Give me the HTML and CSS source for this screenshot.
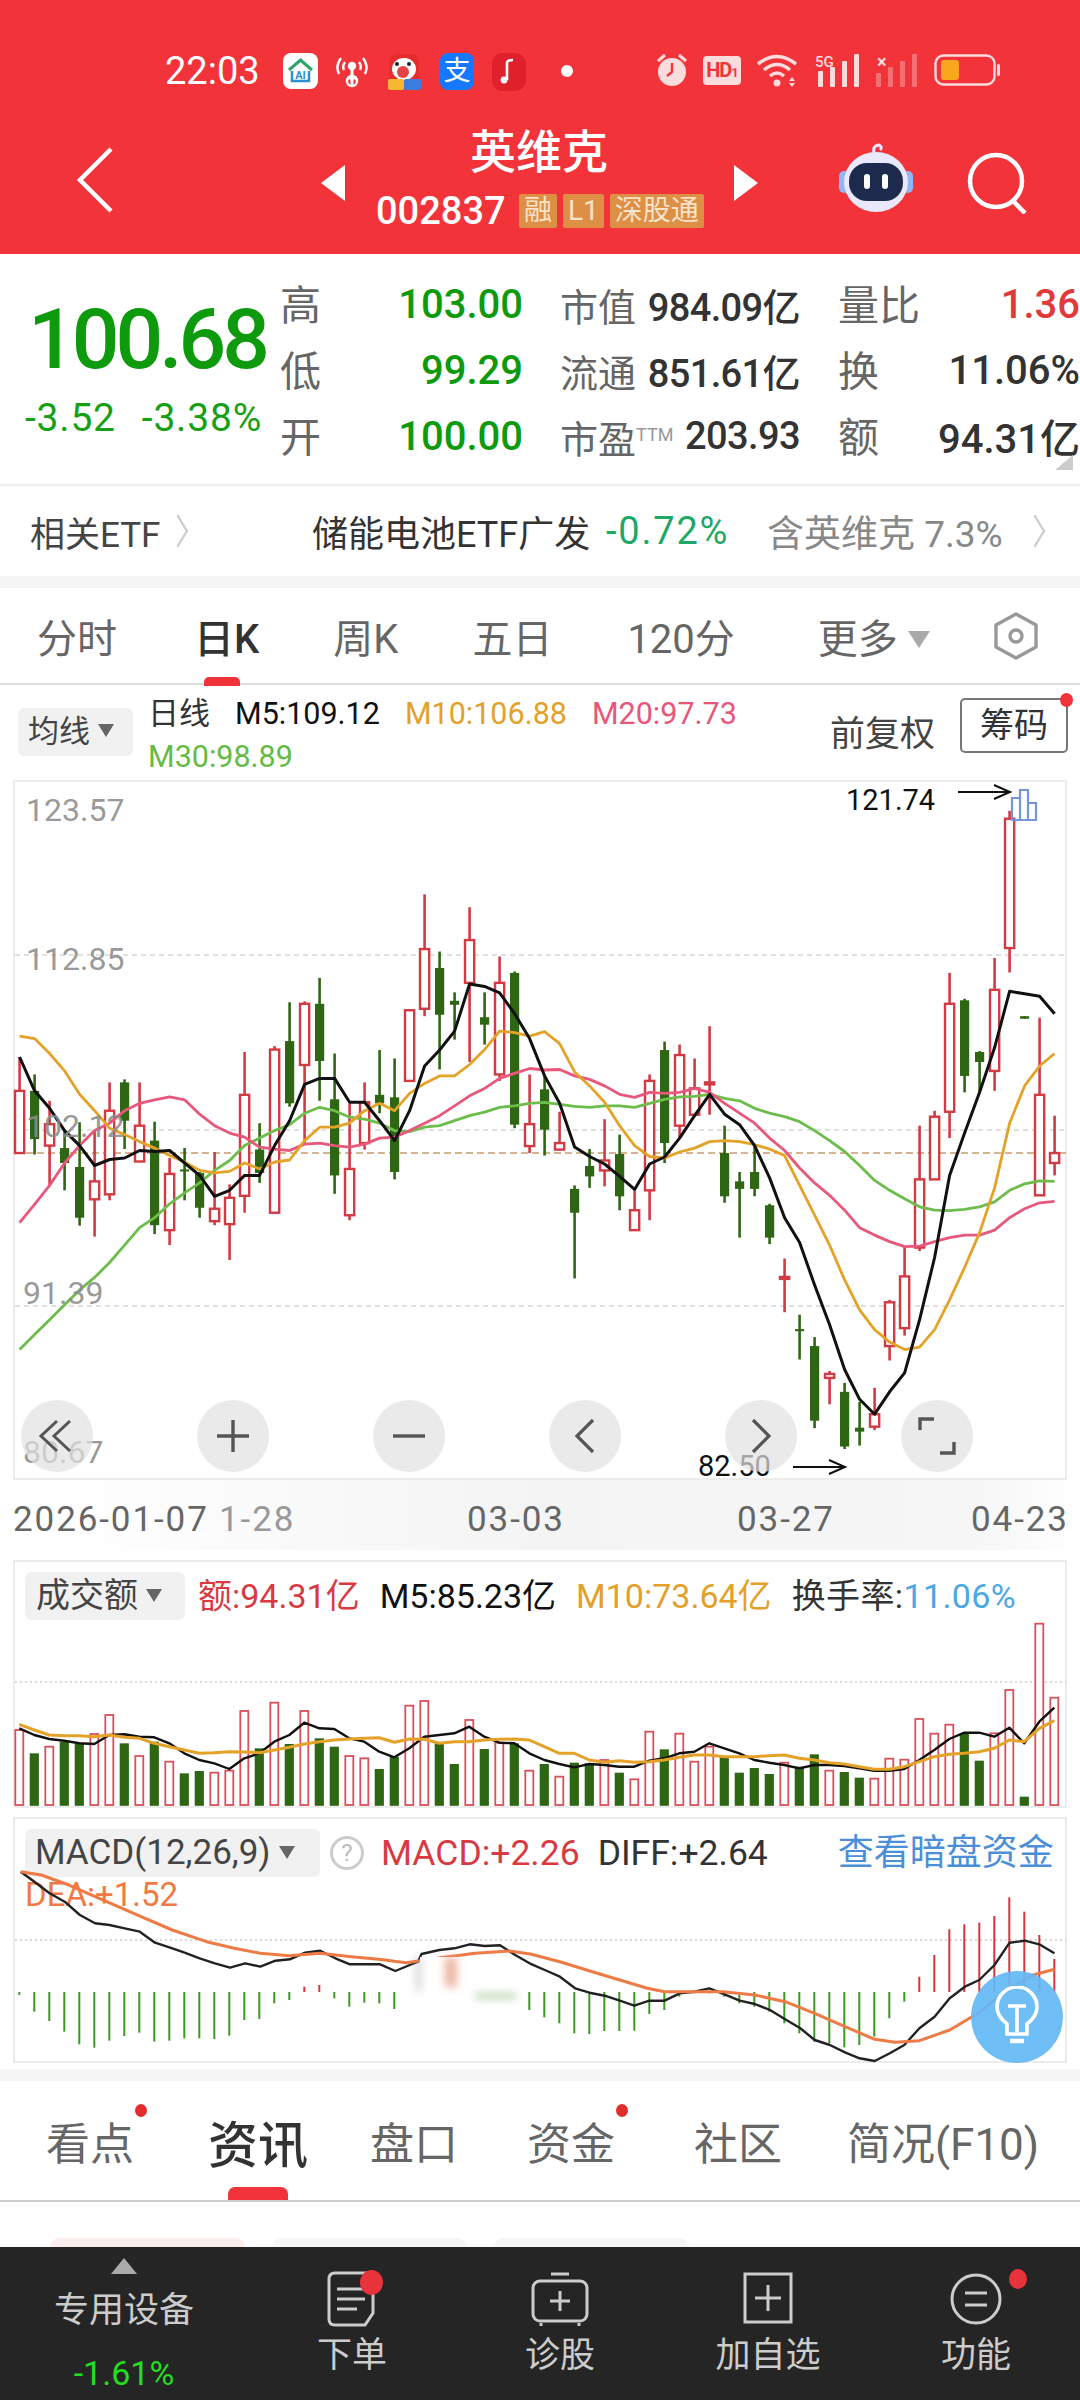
FILE: index.html
```html
<!DOCTYPE html>
<html lang="zh-CN">
<head>
  <meta charset="UTF-8" />
  <meta name="viewport" content="width=device-width, initial-scale=1.0" />
  <title>英维克 002837</title>
  <link rel="stylesheet" href="styles.css">
</head>
<body>

<!-- 顶部红色区域 -->
<header class="top">
  <div class="status">
    <span class="clock">22:03</span>
    <svg class="st-app" width="35" height="36" viewBox="0 0 35 36"><rect width="35" height="36" rx="8" fill="#fff"/><path d="M6 17 L17.5 7 L29 17" fill="none" stroke="#2ea36a" stroke-width="3"/><path d="M9 18 V28 H26 V18" fill="none" stroke="#2f8fd0" stroke-width="2.5"/><text x="17.5" y="26" class="st-ai">AI</text></svg>
    <svg class="st-hot" width="36" height="34" viewBox="0 0 36 34" fill="none" stroke="#fff" stroke-width="2.4"><path d="M7 3 Q1 11 5 19 M29 3 Q35 11 31 19 M11 7 Q8 11 10 15 M25 7 Q28 11 26 15"/><circle cx="18" cy="11" r="3" fill="#fff"/><path d="M18 14 V31 M13 23 H23" stroke-width="3"/><circle cx="18" cy="26" r="5"/></svg>
    <svg class="st-dog" width="36" height="38" viewBox="0 0 36 38"><path d="M3 10 Q3 2 12 1 H30 L33 8 V34 H3 Z" fill="#e52d2d"/><ellipse cx="18" cy="16" rx="12" ry="11" fill="#fff"/><ellipse cx="17" cy="19" rx="6" ry="6" fill="#e2453f"/><circle cx="11" cy="11" r="2" fill="#222"/><circle cx="23" cy="11" r="2" fill="#222"/><rect x="2" y="26" width="16" height="11" rx="2" fill="#f7b733"/><rect x="18" y="26" width="17" height="11" rx="2" fill="#3d7de0"/></svg>
    <span class="st-ali">支</span>
    <svg class="st-note" width="34" height="38" viewBox="0 0 34 38"><rect width="34" height="38" rx="11" fill="#e0202c"/><path d="M15 27 V10 Q15 7 21 7" fill="none" stroke="#fff" stroke-width="2.6"/><circle cx="12" cy="27" r="3.4" fill="#fff"/></svg>
    <i class="st-dot"></i>
    <span class="st-right">
      <svg width="32" height="34" viewBox="0 0 32 34" fill="#fbdcdc"><circle cx="16" cy="19" r="14"/><path d="M2 8 L9 2 M30 8 L23 2" stroke="#fbdcdc" stroke-width="3"/><path d="M16 10 V19 L11 23" fill="none" stroke="#f23339" stroke-width="2.4"/></svg>
      <span class="st-hd">HD<small>1</small></span>
      <svg width="44" height="34" viewBox="0 0 44 34" fill="none" stroke="#fbdcdc" stroke-width="3.6"><path d="M2 11 Q21 -4 40 11 M8 17 Q21 6 34 17 M14 23 Q21 17 28 23"/><circle cx="21" cy="30" r="3.4" fill="#fbdcdc" stroke="none"/><path d="M36 24 L33 28 H39 Z M36 34 L33 30 H39 Z" fill="#fbdcdc" stroke="none"/></svg>
      <svg width="46" height="34" viewBox="0 0 46 34"><text x="0" y="14" class="st-5g">5G</text><g fill="#fbdcdc"><rect x="3" y="18" width="5" height="16" rx="1"/><rect x="15" y="14" width="5" height="20" rx="1"/><rect x="27" y="8" width="5" height="26" rx="1"/><rect x="39" y="1" width="5" height="33" rx="1"/></g></svg>
      <svg width="43" height="34" viewBox="0 0 43 34"><text x="1" y="15" class="st-x">×</text><g fill="#fbdcdc" opacity=".35"><rect x="0" y="20" width="5" height="14" rx="1"/><rect x="12" y="14" width="5" height="20" rx="1"/><rect x="24" y="8" width="5" height="26" rx="1"/><rect x="36" y="1" width="5" height="33" rx="1"/></g></svg>
      <svg width="66" height="32" viewBox="0 0 66 32"><rect x="1.5" y="1.5" width="59" height="29" rx="8" fill="none" stroke="#fbdcdc" stroke-width="2.4"/><rect x="7" y="6" width="18" height="20" rx="3" fill="#f9a71c"/><rect x="63" y="10" width="3" height="12" rx="1.5" fill="#fbdcdc"/></svg>
    </span>
  </div>
  <div class="nav">
    <svg class="nav-back" width="38" height="66" viewBox="0 0 38 66"><path d="M35 2 L4 33 L35 64" fill="none" stroke="#fff" stroke-width="4.5"/></svg>
    <i class="tri-left"></i>
    <div class="stock">
      <div class="stock-name">英维克</div>
      <div class="stock-code">
        <span class="code-num">002837</span>
        <span class="code-tag">融</span><span class="code-tag">L1</span><span class="code-tag">深股通</span>
      </div>
    </div>
    <i class="tri-right"></i>
    <svg class="nav-bot" width="74" height="70" viewBox="0 0 74 70"><path d="M36 12 Q32 3 40 2 Q44 4 41 7" fill="none" stroke="#e8e6ff" stroke-width="3"/><rect x="0" y="28" width="10" height="22" rx="5" fill="#8fb6f5"/><rect x="64" y="28" width="10" height="22" rx="5" fill="#8fb6f5"/><ellipse cx="37" cy="39" rx="32" ry="30" fill="#e9e9fb"/><rect x="10" y="20" width="54" height="38" rx="18" fill="#1e2a4d"/><rect x="25" y="31" width="6" height="15" rx="3" fill="#fff"/><rect x="43" y="31" width="6" height="15" rx="3" fill="#fff"/></svg>
    <svg class="nav-search" width="60" height="62" viewBox="0 0 60 62" fill="none" stroke="#fff" stroke-width="4.5"><circle cx="29" cy="29" r="26"/><path d="M46 49 L58 61"/></svg>
  </div>
</header>

<!-- 报价 -->
<section class="quote">
  <div class="price-box">
    <div class="price">100.68</div>
    <div class="change"><span>-3.52</span><span>-3.38%</span></div>
  </div>
  <div class="q-grid">
    <span class="q-lab">高</span><b class="q-val green">103.00</b>
    <span class="q-mid"><em>市值</em><b>984.09亿</b></span>
    <span class="q-lab2">量比</span><b class="q-val red">1.36</b>

    <span class="q-lab">低</span><b class="q-val green">99.29</b>
    <span class="q-mid"><em>流通</em><b>851.61亿</b></span>
    <span class="q-lab2">换</span><b class="q-val">11.06%</b>

    <span class="q-lab">开</span><b class="q-val green">100.00</b>
    <span class="q-mid"><em>市盈<sup>TTM</sup></em><b>203.93</b></span>
    <span class="q-lab2">额</span><b class="q-val">94.31亿</b>
  </div>
  <i class="corner"></i>
</section>

<section class="etf">
  <span class="etf-title">相关ETF</span>
  <i class="chev"></i>
  <span class="etf-name">储能电池ETF广发</span>
  <span class="etf-pct">-0.72%</span>
  <span class="etf-hold">含英维克 7.3%</span>
  <i class="chev chev-end"></i>
</section>

<div class="band"></div>

<!-- 周期切换 -->
<nav class="periods">
  <span class="p-item p1">分时</span>
  <span class="p-item p2 active">日K</span>
  <span class="p-item p3">周K</span>
  <span class="p-item p4">五日</span>
  <span class="p-item p5">120分</span>
  <span class="p-item p6">更多<i class="caret caret-big"></i></span>
  <svg class="p-hex" width="50" height="48" viewBox="0 0 50 48" fill="none" stroke="#999" stroke-width="3.4"><path d="M25 2 L45 13 V35 L25 46 L5 35 V13 Z" stroke-linejoin="round"/><circle cx="25" cy="24" r="6"/></svg>
</nav>

<!-- 均线 -->
<section class="ma-bar">
  <span class="pick pick-ma">均线<i class="caret"></i></span>
  <div class="ma-vals">
    <div class="ma-row">
      <span class="dark">日线</span>
      <span class="black">M5:109.12</span>
      <span class="orange">M10:106.88</span>
      <span class="pink">M20:97.73</span>
    </div>
    <div class="ma-row"><span class="lime">M30:98.89</span></div>
  </div>
  <span class="adjust">前复权</span>
  <span class="chip-btn">筹码</span>
</section>

<!-- K线 -->
<section class="kline">
  <svg id="kline-svg" class="kline-svg" viewBox="0 780 1080 716" width="1080" height="716"></svg>
  <span class="k-lab l1">123.57</span>
  <span class="k-lab l2">112.85</span>
  <span class="k-lab l3">102.12</span>
  <span class="k-lab l4">91.39</span>
  <span class="k-lab l5">80.67</span>
  <span class="k-mark m-high">121.74</span>
  <span class="k-mark m-low">82.50</span>
  <div class="k-tools">
    <span class="tool"><svg width="40" height="36" viewBox="0 0 40 36" fill="none" stroke="#555" stroke-width="3"><path d="M20 3 L4 18 L20 33 M33 3 L17 18 L33 33"/></svg></span>
    <span class="tool"><svg width="36" height="36" viewBox="0 0 36 36" fill="none" stroke="#555" stroke-width="3.4"><path d="M2 18 H34 M18 2 V34"/></svg></span>
    <span class="tool"><svg width="36" height="36" viewBox="0 0 36 36" fill="none" stroke="#555" stroke-width="3.4"><path d="M2 18 H34"/></svg></span>
    <span class="tool"><svg width="22" height="38" viewBox="0 0 22 38" fill="none" stroke="#555" stroke-width="3.2"><path d="M19 3 L3 19 L19 35"/></svg></span>
    <span class="tool"><svg width="22" height="38" viewBox="0 0 22 38" fill="none" stroke="#555" stroke-width="3.2"><path d="M3 3 L19 19 L3 35"/></svg></span>
    <span class="tool"><svg width="38" height="38" viewBox="0 0 38 38" fill="none" stroke="#555" stroke-width="3.4"><path d="M2 13 V2 H16 M36 25 V36 H22"/></svg></span>
  </div>
</section>

<div class="dates">
  <span class="d-item d1">2026-01-07</span>
  <span class="d-item d2">1-28</span>
  <span class="d-item d3">03-03</span>
  <span class="d-item d4">03-27</span>
  <span class="d-item d5">04-23</span>
</div>

<!-- 成交额 -->
<section class="sub vol">
  <svg id="vol-svg" class="sub-svg" viewBox="0 1560 1080 248" width="1080" height="248"></svg>
  <div class="sub-legend">
    <span class="pick pick-vol">成交额<i class="caret"></i></span>
    <span class="red2">额:94.31亿</span>
    <span class="black">M5:85.23亿</span>
    <span class="orange">M10:73.64亿</span>
    <span class="dark turnover">换手率:<span class="blue">11.06%</span></span>
  </div>
</section>

<!-- MACD -->
<section class="sub macd">
  <div class="sub-legend legend-macd">
    <span class="pick pick-macd">MACD(12,26,9)<i class="caret"></i></span>
    <span class="help">?</span>
    <span class="red2">MACD:+2.26</span>
    <span class="dark">DIFF:+2.64</span>
    <span class="dark-link">查看暗盘资金</span>
  </div>
  <div class="dea">DEA:+1.52</div>
  <svg id="macd-svg" class="sub-svg" viewBox="0 1817 1080 246" width="1080" height="246"></svg>
  <span class="bulb"><svg width="44" height="62" viewBox="0 0 44 62" fill="none" stroke="#fff" stroke-width="3.6"><path d="M12 38 Q2 30 2 21 A20 20 0 0 1 42 21 Q42 30 32 38 V48 H12 Z"/><path d="M13 20 H31 M22 20 V46"/><path d="M15 55 H29" stroke-width="4.5"/></svg></span>
</section>

<div class="band band-low"></div>

<!-- 资讯 -->
<nav class="news-tabs">
  <span class="n-item n1 dotted">看点</span>
  <span class="n-item n2 active">资讯</span>
  <span class="n-item n3">盘口</span>
  <span class="n-item n4 dotted">资金</span>
  <span class="n-item n5">社区</span>
  <span class="n-item n6">简况(F10)</span>
</nav>

<div class="pills">
  <i class="pill pill-on"></i><i class="pill"></i><i class="pill"></i>
</div>

<!-- 底部 -->
<footer class="bar">
  <div class="bar-item bar-sector">
    <i class="bar-up"></i>
    <span class="sector-name">专用设备</span>
    <span class="sector-pct">-1.61%</span>
  </div>
  <div class="bar-item">
    <span class="bar-icon"><svg width="50" height="56" viewBox="0 0 50 56" fill="none" stroke="#ccc" stroke-width="3"><path d="M8 2 H46 V42 L38 54 H8 Q2 54 2 48 V8 Q2 2 8 2 Z"/><path d="M10 18 H38 M10 28 H38 M10 38 H30"/></svg><i class="b-dot b-dot-order"></i></span>
    <span class="bar-label">下单</span>
  </div>
  <div class="bar-item">
    <span class="bar-icon"><svg width="58" height="56" viewBox="0 0 58 56" fill="none" stroke="#ccc" stroke-width="3"><path d="M20 3 H38"/><rect x="2" y="10" width="54" height="40" rx="7"/><path d="M29 20 V40 M19 30 H39"/><path d="M10 52 V55 M48 52 V55"/></svg></span>
    <span class="bar-label">诊股</span>
  </div>
  <div class="bar-item">
    <span class="bar-icon"><svg width="50" height="56" viewBox="0 0 50 56" fill="none" stroke="#ccc" stroke-width="3"><rect x="2" y="3" width="46" height="48"/><path d="M25 14 V40 M12 27 H38"/></svg></span>
    <span class="bar-label">加自选</span>
  </div>
  <div class="bar-item">
    <span class="bar-icon"><svg width="52" height="56" viewBox="0 0 52 56" fill="none" stroke="#ccc" stroke-width="3"><circle cx="26" cy="28" r="24"/><path d="M15 22 H37 M15 34 H37"/></svg><i class="b-dot b-dot-func"></i></span>
    <span class="bar-label">功能</span>
  </div>
</footer>

<script src="chart.js"></script>
</body>
</html>
```

FILE: styles.css
```css
* {
  box-sizing: border-box;
}

body {
  margin: 0;
  width: 1080px;
  height: 2400px;
  overflow: hidden;
  background: #fff;
  font-family: Roboto, "Noto Sans CJK SC", sans-serif;
  color: #333;
}

i, em {
  font-style: normal;
}

b {
  font-weight: 500;
}

/* 顶部 */
.top {
  height: 254px;
  background: #f23339;
  color: #fff;
}

.status {
  height: 125px;
  padding: 53px 0 0 165px;
  display: flex;
  align-items: flex-start;
}

.clock {
  font-size: 38px;
  line-height: 36px;
  width: 118px;
}

.st-ai { font: 700 11px Roboto, sans-serif; fill: #2f8fd0; text-anchor: middle; }
.st-5g { font: 500 15px Roboto, sans-serif; fill: #fbdcdc; }
.st-x { font: 700 18px Roboto, sans-serif; fill: #fbdcdc; }

.st-hot { margin: 2px 0 0 16px; }
.st-dog { margin-left: 16px; }

.st-ali {
  width: 34px;
  height: 37px;
  margin-left: 18px;
  border-radius: 8px;
  background: #1677ff;
  font-size: 27px;
  line-height: 36px;
  text-align: center;
}

.st-note { margin-left: 18px; }

.st-dot {
  width: 12px;
  height: 12px;
  margin: 12px 0 0 35px;
  border-radius: 50%;
  background: #fff;
}

.st-right {
  display: flex;
  align-items: center;
  gap: 15px;
  margin-left: 83px;
}

.st-hd {
  width: 38px;
  height: 29px;
  border-radius: 4px;
  background: #fbdcdc;
  color: #f23339;
  font-size: 20px;
  font-weight: 700;
  line-height: 29px;
  text-align: center;
  letter-spacing: -1px;
}

.st-hd small { font-size: 13px; }

.nav {
  display: flex;
  align-items: flex-start;
  padding-left: 76px;
}

.nav-back { margin-top: 22px; }

.tri-left, .tri-right {
  width: 0;
  height: 0;
  margin-top: 40px;
  border-top: 18px solid transparent;
  border-bottom: 18px solid transparent;
}

.tri-left { margin-left: 207px; border-right: 24px solid #fff; }
.tri-right { margin-left: 30px; border-left: 24px solid #fff; }

.stock {
  width: 328px;
  margin-left: 31px;
}

.stock-name {
  height: 68px;
  padding-left: 94px;
  font-size: 46px;
  font-weight: 500;
  line-height: 54px;
}

.stock-code {
  display: flex;
  align-items: center;
  height: 36px;
  white-space: nowrap;
}

.code-num {
  flex-shrink: 0;
  width: 143px;
  font-size: 38px;
  font-weight: 500;
}

.code-tag {
  flex-shrink: 0;
  height: 34px;
  margin-right: 6px;
  padding: 0 5px;
  border-radius: 2px;
  background: #dd8f45;
  color: #f8e2c8;
  font-size: 28px;
  line-height: 33px;
}

.nav-bot { margin: 18px 0 0 81px; }
.nav-search { margin: 27px 0 0 54px; }

/* 报价 */
.quote {
  position: relative;
  display: flex;
  height: 232px;
  border-bottom: 2px solid #eee;
}

.price-box {
  flex-shrink: 0;
  width: 280px;
  padding: 41px 0 0 28px;
}

.price {
  color: #0d9a0d;
  font-size: 84px;
  font-weight: 500;
  line-height: 90px;
  letter-spacing: -4px;
}

.change {
  display: flex;
  gap: 26px;
  margin: 11px 0 0 -3px;
  color: #16a016;
  font-size: 39px;
  line-height: 44px;
  letter-spacing: .8px;
  white-space: nowrap;
}

.q-grid {
  flex: 1;
  display: grid;
  grid-template-columns: 60px 183px 277px 130px 1fr;
  grid-auto-rows: 66px;
  align-items: center;
  padding: 17px 0 0 0;
  white-space: nowrap;
}

.q-lab, .q-lab2 {
  margin-top: -5px;
  color: #666;
  font-size: 41px;
}

.q-lab2 { margin-left: 38px; }

.q-val {
  font-size: 40px;
  text-align: right;
}

.q-mid {
  display: flex;
  justify-content: space-between;
  margin-left: 37px;
  align-items: center;
}

.q-mid em {
  color: #666;
  font-size: 38px;
}

.q-mid sup {
  font-size: 18px;
  vertical-align: 12px;
  line-height: 0;
  color: #999;
}

.q-mid b {
  font-size: 38px;
  letter-spacing: -.6px;
}

.green { color: #0d9a0d; }
.red { color: #e03a3a; }

.corner {
  position: absolute;
  right: 7px;
  top: 201px;
  width: 0;
  height: 0;
  border-left: 18px solid transparent;
  border-bottom: 15px solid #ccc;
}

/* 相关ETF */
.etf {
  display: flex;
  align-items: center;
  height: 90px;
  padding-left: 30px;
  font-size: 35px;
  white-space: nowrap;
}

.etf-title { color: #444; width: 140px; }
.etf-name { margin-left: 122px; width: 294px; color: #333; font-size: 36px; }
.etf-pct { width: 161px; color: #1da866; font-size: 38px; letter-spacing: 1.8px; }
.etf-hold { width: 256px; color: #888; font-size: 37px; }

.chev {
  width: 24px;
  height: 24px;
  margin-left: -4px;
  border-top: 3px solid #ccc;
  border-right: 3px solid #ccc;
  transform: scaleX(.6) rotate(45deg);
}

.chev-end { margin-left: 0; }

.band {
  height: 12px;
  background: #f5f5f5;
}

/* 周期 */
.periods {
  position: relative;
  display: flex;
  align-items: center;
  height: 97px;
  border-bottom: 2px solid #ddd;
}

.p-item {
  position: relative;
  color: #666;
  font-size: 40px;
  white-space: nowrap;
}

.p1 { margin-left: 37px; }
.p2 { margin-left: 77px; }
.p3 { margin-left: 74px; }
.p4 { margin-left: 74px; }
.p5 { margin-left: 75px; }
.p6 { margin-left: 83px; }
.p-hex { margin-left: 61px; }

.p-item.active {
  color: #333;
  font-weight: 500;
}

.p-item.active::after {
  content: '';
  position: absolute;
  left: 10px;
  bottom: -21px;
  width: 36px;
  height: 9px;
  border-radius: 5px 5px 0 0;
  background: #ef3338;
}

.caret {
  display: inline-block;
  margin-left: 8px;
  vertical-align: 5px;
  border-left: 8px solid transparent;
  border-right: 8px solid transparent;
  border-top: 13px solid #666;
}

.caret-big {
  margin-left: 10px;
  border-left-width: 11px;
  border-right-width: 11px;
  border-top: 17px solid #aaa;
}

/* 均线 */
.ma-bar {
  position: relative;
  display: flex;
  height: 95px;
  padding-left: 18px;
  white-space: nowrap;
}

.pick {
  height: 48px;
  border-radius: 6px;
  background: #f1f1f1;
  color: #444;
  line-height: 47px;
  white-space: nowrap;
}

.pick-ma {
  width: 115px;
  margin-top: 23px;
  padding-left: 10px;
  font-size: 31px;
}

.ma-vals {
  width: 643px;
  margin-left: 15px;
  font-size: 30.5px;
  line-height: 43px;
}

.ma-row {
  display: flex;
  gap: 25px;
}

.ma-vals .ma-row:first-child { margin-top: 7px; }
.ma-vals .dark { font-size: 31px; }

.dark { color: #333; }
.black { color: #111; }
.orange { color: #e3a02a; }
.pink { color: #e8567a; }
.lime { color: #64bb45; }
.red2 { color: #d93a42; }
.blue { color: #4ba8e2; }

.adjust {
  margin: 20px 0 0 39px;
  font-size: 35px;
  color: #444;
}

.chip-btn {
  position: relative;
  width: 108px;
  height: 55px;
  margin: 13px 0 0 25px;
  border: 2px solid #777;
  border-radius: 5px;
  font-size: 34px;
  line-height: 50px;
  text-align: center;
}

.chip-btn::after {
  content: '';
  position: absolute;
  right: -7px;
  top: -7px;
  width: 13px;
  height: 14px;
  border-radius: 50%;
  background: #f0333a;
}

/* K线 */
.kline {
  position: relative;
  width: 1054px;
  height: 700px;
  margin-left: 13px;
  border: 2px solid #ececec;
}

.kline-svg {
  position: absolute;
  left: -15px;
  top: -2px;
  overflow: visible;
}

.k-lab {
  position: absolute;
  color: rgba(140,140,140,.9);
  font-size: 32px;
  line-height: 36px;
}

.l1 { left: 11px; top: 10px; }
.l2 { left: 11px; top: 159px; }
.l3 { left: 11px; top: 326px; }
.l4 { left: 8px; top: 493px; }
.l5 { left: 8px; top: 652px; }

.k-mark {
  position: absolute;
  color: #111;
  font-size: 29px;
  line-height: 32px;
}

.m-high { left: 831px; top: 2px; }
.m-low { left: 683px; top: 668px; }

.k-tools {
  position: absolute;
  left: 6px;
  top: 618px;
  display: flex;
  gap: 104px;
}

.tool {
  display: flex;
  align-items: center;
  justify-content: center;
  width: 72px;
  height: 72px;
  border-radius: 50%;
  background: rgba(225,225,225,.7);
}

.dates {
  position: relative;
  height: 70px;
  background: linear-gradient(90deg, #fff 5%, #f4f4f4 50%, #f6f6f6 90%, #fff);
}

.d-item {
  position: absolute;
  top: 20px;
  color: #666;
  font-size: 35px;
  line-height: 40px;
  letter-spacing: 1.9px;
}

.d1 { left: 13px; }
.d2 { left: 219px; color: #999; }
.d3 { left: 467px; }
.d4 { left: 737px; }
.d5 { left: 971px; }

/* 副图 */
.sub {
  position: relative;
  width: 1054px;
  margin-left: 13px;
  border: 2px solid #ececec;
}

.vol {
  height: 248px;
  margin-top: 10px;
}

.macd {
  height: 246px;
  margin-top: 9px;
}

.sub-svg {
  position: absolute;
  left: -15px;
  top: -2px;
}

.sub-legend {
  position: relative;
  display: flex;
  align-items: center;
  padding: 10px 0 0 10px;
  font-size: 34px;
  line-height: 48px;
  white-space: nowrap;
}

.sub-legend > span { margin-right: 20px; }

.turnover { letter-spacing: .4px; }

.pick-vol {
  width: 160px;
  padding-left: 11px;
  font-size: 34px;
}

.sub-legend > .pick-vol { margin-right: 13px; }

.legend-macd { font-size: 35.5px; }

.legend-macd > .pick-macd { width: 295px; margin-right: 10px; }

.pick-macd {
  padding-left: 10px;
  font-size: 35px;
}

.legend-macd > .red2 { margin-right: 18px; }

.sub-legend > .help {
  width: 34px;
  height: 34px;
  margin-right: 17px;
  border: 3px solid #ccc;
  border-radius: 50%;
  color: #bbb;
  font-size: 24px;
  line-height: 28px;
  text-align: center;
}

.sub-legend > .dark-link {
  margin: 0 0 0 50px;
  color: #4b8fd8;
  font-size: 36px;
}

.dea {
  position: relative;
  margin-left: 10px;
  color: #ef7a45;
  font-size: 33px;
  line-height: 36px;
}

.smudge {
  filter: blur(4px);
}

.bulb {
  position: absolute;
  left: 956px;
  top: 152px;
  display: flex;
  align-items: center;
  justify-content: center;
  width: 92px;
  height: 92px;
  border-radius: 50%;
  background: rgba(100,185,245,.92);
}

/* 资讯 */
.band-low { margin-top: 6px; }

.news-tabs {
  position: relative;
  display: flex;
  height: 121px;
  border-bottom: 2px solid #ccc;
  color: #666;
  font-size: 44px;
  align-items: center;
  white-space: nowrap;
}

.n-item { position: relative; }
.n1 { margin-left: 46px; }
.n2 { margin-left: 74px; font-size: 50px; font-weight: 500; color: #333; }
.n3 { margin-left: 62px; }
.n4 { margin-left: 69px; }
.n5 { margin-left: 79px; }
.n6 { margin-left: 65px; }

.dotted::after {
  content: '';
  position: absolute;
  right: -13px;
  top: -5px;
  width: 12px;
  height: 13px;
  border-radius: 50%;
  background: #e22d2d;
}

.n2::after {
  content: '';
  position: absolute;
  left: 20px;
  bottom: -23px;
  width: 60px;
  height: 13px;
  border-radius: 7px 7px 0 0;
  background: #f23339;
}

.pills {
  display: flex;
  gap: 27px;
  height: 45px;
  padding: 36px 0 0 50px;
}

.pill {
  width: 195px;
  height: 9px;
  border-radius: 9px 9px 0 0;
  background: #f6f6f6;
}

.pill-on { background: #fdeeee; }

/* 底部 */
.bar {
  display: flex;
  height: 153px;
  background: #252525;
  color: #ccc;
}

.bar-item {
  position: relative;
  flex: 1;
  display: flex;
  flex-direction: column;
  align-items: center;
  padding-top: 24px;
}

.bar-sector {
  flex: 0 0 248px;
  padding-top: 11px;
}

.bar-up {
  width: 0;
  height: 0;
  border-left: 13px solid transparent;
  border-right: 13px solid transparent;
  border-bottom: 16px solid #aaa;
}

.sector-name {
  margin-top: 17px;
  font-size: 35px;
  line-height: 40px;
}

.sector-pct {
  margin-top: 22px;
  color: #22dd22;
  font-size: 34px;
  line-height: 40px;
}

.bar-icon {
  position: relative;
  display: block;
  height: 56px;
}

.bar-icon svg { display: block; }

.bar-label {
  margin-top: 9px;
  font-size: 35px;
  line-height: 40px;
}

.b-dot {
  position: absolute;
  border-radius: 50%;
  background: #e8333a;
}

.b-dot-order { right: -6px; top: -1px; width: 23px; height: 25px; }
.b-dot-func { right: -25px; top: -2px; width: 18px; height: 20px; }
```

FILE: chart.js
```js
// 数据按截图量出来的，y 都是放大图上的坐标，画的时候再换算
const NS = 'http://www.w3.org/2000/svg';
const RED = '#d23a44';
const GREEN = '#2f6614';

function add(svg, tag, attrs) {
  const el = document.createElementNS(NS, tag);
  for (const k in attrs) el.setAttribute(k, attrs[k]);
  svg.appendChild(el);
  return el;
}

function line(svg, pts, color, width) {
  add(svg, 'polyline', {
    points: pts.map(p => p[0].toFixed(1) + ',' + p[1].toFixed(1)).join(' '),
    fill: 'none', stroke: color, 'stroke-width': width, 'stroke-linejoin': 'round'
  });
}

function dash(svg, y, color, x1, x2, gap) {
  add(svg, 'line', { x1, x2, y1: y, y2: y, stroke: color, 'stroke-width': 1.5, 'stroke-dasharray': gap });
}

/* ---------- K线 ---------- */
// [红/绿, 高, 实体上, 实体下, 低]
const candles = [
  ['r',597,665,790,790],['g',632,665,762,793],['r',685,732,775,855],['g',745,780,810,865],['g',728,818,920,936],
  ['r',745,847,883,958],['r',648,705,873,885],['g',642,648,725,782],['r',648,735,807,807],['g',727,765,935,953],
  ['r',800,832,945,975],['g',780,823,827,885],['g',828,830,900,920],['r',788,902,927,935],['r',853,880,933,1005],
  ['r',587,673,876,910],['g',730,783,830,850],['r',575,582,910,910],['g',487,565,690,697],['r',485,490,613,770],
  ['g',438,490,605,685],['g',590,682,835,872],['r',690,822,915,925],['r',648,688,770,783],['g',583,673,690,710],
  ['g',600,678,828,843],['r',503,503,645,645],['r',270,380,500,515],['g',385,418,512,622],['g',467,484,492,562],
  ['r',296,362,448,607],['g',467,517,532,572],['r',395,448,632,645],['g',425,428,733,740],['r',632,732,776,790],
  ['g',635,662,743,795],['r',707,770,783,785],['g',855,862,910,1042],['g',782,816,837,860],['r',722,805,825,857],
  ['g',753,792,877,905],['r',865,905,945,945],['r',632,645,865,925],['g',566,583,770,810],['r',572,593,735,760],
  ['r',600,660,713,713],['r',535,648,650,713],['g',735,790,877,890],['g',828,847,862,960],['g',775,828,862,877],
  ['g',892,895,960,973],['r',1002,1039,1042,1110],['g',1115,1144,1148,1205],['g',1160,1178,1328,1343],['r',1228,1234,1242,1295],
  ['g',1252,1270,1380,1385],['g',1290,1342,1350,1378],['r',1262,1315,1340,1347],['r',1085,1090,1178,1207],['r',978,1038,1142,1157],
  ['r',735,843,980,987],['r',705,717,843,843],['r',428,490,707,760],['g',480,483,635,668],['g',585,587,607,670],
  ['r',398,462,625,665],['r',102,118,378,427],['g',515,515,520,520],['r',518,673,875,875],['r',715,790,810,835]
];
const ma5 = [597,665,700,745,775,815,803,800,785,787,785,810,835,877,865,835,835,775,725,652,640,640,688,688,725,765,705,615,583,545,450,455,468,510,560,635,690,778,797,812,837,863,812,798,760,715,672,712,733,775,840,920,970,1055,1135,1225,1285,1315,1270,1232,1125,1000,835,750,668,578,465,470,475,510];
const ma10 = [555,560,590,625,672,705,740,753,767,780,795,808,825,830,827,810,822,808,804,765,738,738,730,705,690,705,670,650,635,635,612,582,545,548,555,546,570,627,655,688,735,775,797,800,788,780,767,765,767,773,782,795,855,915,975,1045,1105,1145,1170,1185,1180,1145,1085,1020,950,860,730,655,615,590];
const ma20 = [930,893,855,810,775,745,730,705,690,683,677,683,712,735,750,758,778,782,785,772,770,775,778,772,760,758,745,730,715,695,675,660,640,630,620,623,622,635,642,655,672,678,668,670,668,660,668,690,710,730,760,785,820,850,875,905,940,955,968,978,977,968,960,955,955,945,920,902,890,887];
const ma30 = [1185,1155,1125,1095,1065,1040,1010,975,940,920,892,870,850,825,805,775,760,745,733,710,698,705,718,722,730,745,747,738,735,725,715,708,698,695,690,688,692,696,698,695,695,698,690,682,677,676,672,680,685,700,710,717,727,745,765,787,815,845,865,882,898,905,906,903,898,888,865,852,846,847];

function drawKline() {
  const svg = document.getElementById('kline-svg');
  const kx = i => 19.6 + 15 * i;
  const ky = z => 760 + z / 2.01;

  [955, 1130, 1306].forEach(y => dash(svg, y, '#d6d6d6', 15, 1066, '5 4'));
  dash(svg, 1153, '#c99a6e', 15, 1066, '7 4');

  candles.forEach((c, i) => {
    const x = kx(i);
    const color = c[0] === 'r' ? RED : GREEN;
    add(svg, 'line', { x1: x, x2: x, y1: ky(c[1]), y2: ky(c[4]), stroke: color, 'stroke-width': 2.6 });
    const top = ky(c[2]);
    const h = Math.max(ky(c[3]) - top, 2);
    if (c[0] === 'r') {
      add(svg, 'rect', { x: x - 4.6, y: top, width: 9.2, height: h, fill: '#fff', stroke: color, 'stroke-width': 2.4 });
    } else {
      add(svg, 'rect', { x: x - 4.6, y: top, width: 9.2, height: h, fill: color });
    }
  });

  const series = (arr) => arr.map((z, i) => [kx(i), ky(z)]);
  line(svg, series(ma30), '#6cbd4b', 2.8);
  line(svg, series(ma20), '#e8587c', 2.8);
  line(svg, series(ma10), '#e5a228', 2.8);
  line(svg, series(ma5), '#111', 3);

  // 最高最低箭头
  add(svg, 'path', { d: 'M958 792 H1010 M994 785 L1010 792 L994 799', fill: 'none', stroke: '#111', 'stroke-width': 2 });
  add(svg, 'path', { d: 'M793 1467 H845 M829 1460 L845 1467 L829 1474', fill: 'none', stroke: '#111', 'stroke-width': 2 });
  // 小柱状图标
  add(svg, 'path', { d: 'M1012 820 V798 H1020 V790 H1028 V803 H1036 V820 Z M1020 798 V820 M1028 803 V820', fill: 'none', stroke: '#7494dc', 'stroke-width': 2.2 });

  // 刻度
  for (let i = 14; i < 70; i++) {
    const big = [15, 33, 51, 69].indexOf(i) >= 0;
    add(svg, 'line', {
      x1: kx(i), x2: kx(i), y1: 1481, y2: big ? 1495 : 1489,
      stroke: big ? '#888' : '#bbb', 'stroke-width': big ? 2.4 : 1.6,
      opacity: i < 17 ? .6 : 1
    });
  }
}

/* ---------- 成交额 ---------- */
const volTops = [
  ['r',570],['g',640],['r',620],['g',605],['g',612],['r',582],['r',525],['g',610],['r',648],['g',605],
  ['r',665],['g',700],['g',693],['r',698],['r',692],['r',513],['g',625],['r',488],['g',612],['r',513],
  ['g',595],['g',620],['r',648],['r',655],['g',687],['g',650],['r',497],['r',483],['g',608],['g',672],
  ['r',540],['g',627],['r',608],['g',610],['r',692],['g',672],['r',710],['g',668],['g',670],['r',660],
  ['g',698],['r',718],['r',575],['g',628],['r',581],['r',665],['r',620],['g',648],['g',698],['g',684],
  ['g',702],['r',668],['g',680],['g',643],['r',692],['g',696],['g',713],['r',716],['r',656],['r',659],
  ['r',537],['r',581],['r',554],['g',582],['g',662],['r',580],['r',450],['g',770],['r',251],['r',473]
];
const volM5 = [565,585,597,602,610,612,585,583,590,592,610,640,660,670,687,655,640,605,585,548,565,567,595,605,635,652,625,590,585,580,560,590,608,610,640,660,672,682,672,675,680,680,662,655,640,635,610,625,640,660,668,675,685,675,675,678,685,692,692,687,660,630,597,578,578,590,563,610,545,503];
const volM10 = [553,570,585,587,587,590,585,592,595,610,620,630,640,638,635,636,638,630,622,612,605,600,597,595,593,607,597,598,610,605,605,600,598,597,600,620,640,640,660,667,662,667,665,660,652,645,645,650,650,650,647,645,655,660,668,672,680,688,688,680,665,650,643,640,635,625,600,605,565,542];

function drawVol() {
  const svg = document.getElementById('vol-svg');
  const vx = i => 19.3 + 15 * i;
  const vy = z => 1540 + z / 3;

  add(svg, 'line', { x1: 15, x2: 1066, y1: 1682, y2: 1682, stroke: '#ccc', 'stroke-width': 1.6, 'stroke-dasharray': '2 3' });
  volTops.forEach((b, i) => {
    const x = vx(i);
    const top = vy(b[1]);
    if (b[0] === 'r') {
      add(svg, 'rect', { x: x - 4, y: top, width: 8, height: 1805 - top, fill: '#fff', stroke: '#d9505a', 'stroke-width': 1.8 });
    } else {
      add(svg, 'rect', { x: x - 4.6, y: top, width: 9.2, height: 1805.8 - top, fill: GREEN });
    }
  });
  line(svg, volM5.map((z, i) => [vx(i), vy(z)]), '#111', 2.4);
  line(svg, volM10.map((z, i) => [vx(i), vy(z)]), '#e5a228', 3);
}

/* ---------- MACD ---------- */
// 下方绿柱/上方红柱的末端，null 是被打码遮住的那几根
const macdEnds = [555,605,633,665,703,713,692,678,668,695,692,685,685,687,677,630,627,580,570,530,525,565,590,578,580,597,null,null,null,null,null,null,null,null,600,622,640,670,672,663,663,662,612,600,560,550,550,560,580,590,605,640,670,695,700,712,705,680,625,575,500,435,358,343,338,318,262,305,375,447];
const diff = [[30,185],[50,215],[72,250],[94,275],[116,315],[138,340],[159,345],[181,355],[203,365],[225,398],[246,412],[268,428],[290,445],[312,460],[334,473],[356,460],[378,470],[400,452],[421,448],[443,428],[465,422],[487,445],[508,463],[530,463],[552,463],[574,483],[595,465],[607,455],[612,432],[638,420],[660,415],[682,403],[704,408],[726,406],[748,435],[769,460],[791,480],[813,500],[835,535],[856,548],[878,557],[900,572],[921,587],[943,572],[965,572],[987,550],[1008,545],[1030,535],[1052,553],[1074,572],[1096,582],[1118,600],[1140,628],[1162,655],[1183,690],[1205,705],[1227,727],[1248,745],[1270,753],[1292,730],[1313,705],[1335,655],[1357,620],[1379,565],[1401,530],[1422,510],[1444,465],[1466,398],[1488,392],[1509,403],[1531,430]];
const dea = [[30,185],[60,195],[100,225],[150,270],[200,315],[250,360],[300,395],[340,415],[378,430],[420,437],[465,430],[510,440],[550,448],[590,458],[640,443],[690,430],[740,423],[770,432],[813,455],[860,485],[900,510],[940,535],[965,545],[1008,545],[1050,545],[1096,555],[1140,575],[1183,610],[1227,650],[1270,688],[1300,697],[1335,692],[1379,660],[1420,610],[1466,535],[1500,495],[1531,478]];

function drawMacd() {
  const svg = document.getElementById('macd-svg');
  const mx = z => z / 1.452;
  const my = z => 1810 + z / 3;
  const conv = p => [mx(p[0]), my(p[1])];

  add(svg, 'line', { x1: 15, x2: 1066, y1: 1940, y2: 1940, stroke: '#ccc', 'stroke-width': 1.6, 'stroke-dasharray': '2 3' });
  macdEnds.forEach((z, i) => {
    if (z === null) return;
    const x = 19.3 + 15 * i;
    add(svg, 'line', { x1: x, x2: x, y1: 1992, y2: my(z), stroke: z < 545 ? '#d8343c' : '#3b9a22', 'stroke-width': 2 });
  });
  line(svg, diff.map(conv), '#222', 2.4);
  line(svg, dea.map(conv), '#ee7a45', 3);

  // 打码的一块
  add(svg, 'rect', { x: 420, y: 1957, width: 97, height: 44, fill: '#fff' });
  add(svg, 'rect', { x: 417, y: 1957, width: 3, height: 34, fill: '#8a8a9a', opacity: .7, class: 'smudge' });
  add(svg, 'rect', { x: 445, y: 1957, width: 12, height: 30, fill: '#e8a28a', opacity: .8, class: 'smudge' });
  add(svg, 'rect', { x: 475, y: 1994, width: 41, height: 4, fill: '#7fb56a', opacity: .8, class: 'smudge' });
}

drawKline();
drawVol();
drawMacd();
```
